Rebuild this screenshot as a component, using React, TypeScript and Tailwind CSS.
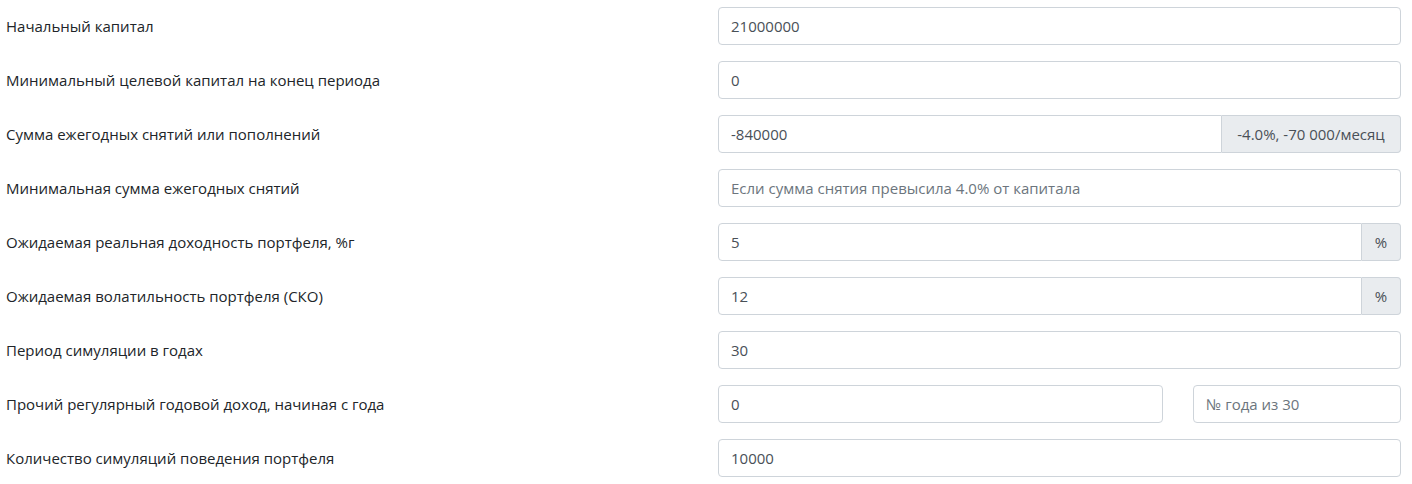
import React from 'react';

type Row = {
  label: string;
  value?: string;
  placeholder?: string;
  addon?: string;
  second?: string;
};

const rows: Row[] = [
  { label: 'Начальный капитал', value: '21000000' },
  { label: 'Минимальный целевой капитал на конец периода', value: '0' },
  { label: 'Сумма ежегодных снятий или пополнений', value: '-840000', addon: '-4.0%, -70 000/месяц' },
  { label: 'Минимальная сумма ежегодных снятий', placeholder: 'Если сумма снятия превысила 4.0% от капитала' },
  { label: 'Ожидаемая реальная доходность портфеля, %г', value: '5', addon: '%' },
  { label: 'Ожидаемая волатильность портфеля (СКО)', value: '12', addon: '%' },
  { label: 'Период симуляции в годах', value: '30' },
  { label: 'Прочий регулярный годовой доход, начиная с года', value: '0', second: '№ года из 30' },
  { label: 'Количество симуляций поведения портфеля', value: '10000' },
];

const inputCls =
  'h-[38px] px-3 border border-[#ced4da] bg-white text-[#495057] placeholder:text-[#6c757d] outline-none';

const App = () => {
  return (
    <div className="min-h-screen bg-white pl-[6px] pt-[7px]" style={{ fontFamily: '"Open Sans", "Noto Sans", sans-serif' }}>
      {rows.map((r, i) => (
        <div key={i} className="flex items-center mb-4 text-[15px]">
          <div className="w-[712px] shrink-0 text-[#212529]">{r.label}</div>
          <div className="w-[683px] shrink-0 flex">
            {r.second ? (
              <>
                <input className={`${inputCls} w-[445px] rounded`} defaultValue={r.value} />
                <input className={`${inputCls} ml-[30px] w-[208px] rounded`} placeholder={r.second} />
              </>
            ) : r.addon ? (
              <>
                <input className={`${inputCls} flex-1 min-w-0 rounded-l`} defaultValue={r.value} />
                <span
                  className={`h-[38px] ${r.addon.length > 1 ? 'w-[179px]' : 'w-[39px]'} shrink-0 flex items-center justify-center border border-l-0 border-[#ced4da] bg-[#e9ecef] text-[#495057] rounded-r whitespace-nowrap`}
                >
                  {r.addon}
                </span>
              </>
            ) : (
              <input
                className={`${inputCls} flex-1 min-w-0 rounded`}
                defaultValue={r.value}
                placeholder={r.placeholder}
              />
            )}
          </div>
        </div>
      ))}
    </div>
  );
};

export default App;
